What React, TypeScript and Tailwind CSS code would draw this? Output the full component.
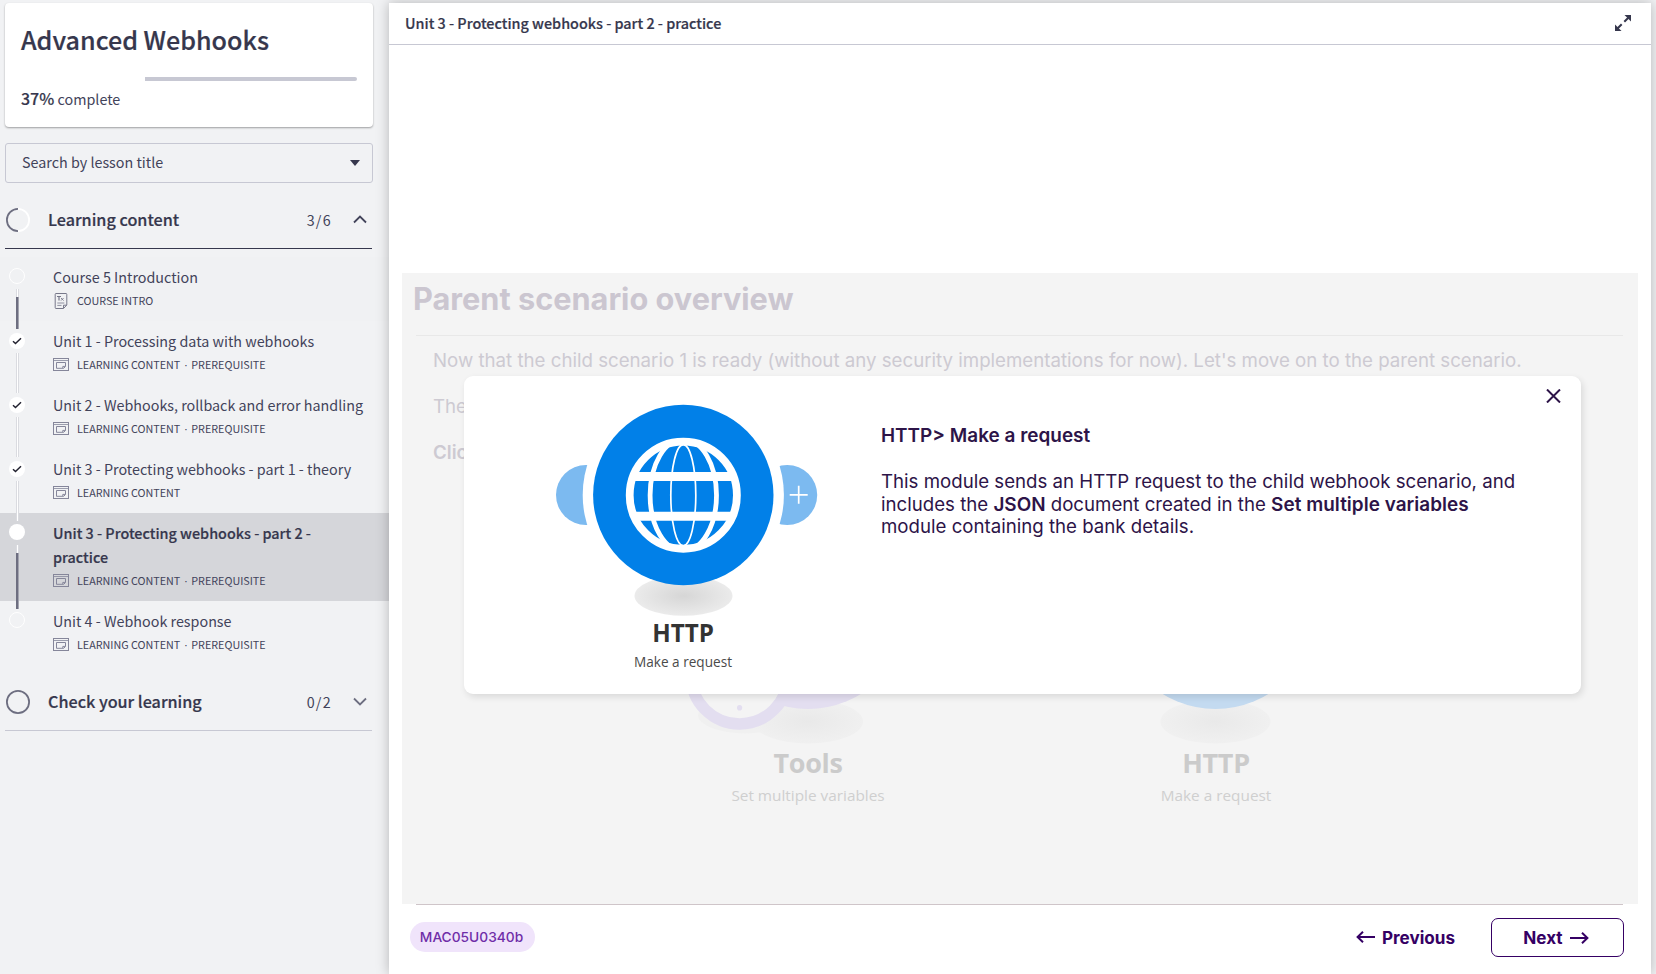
import React from 'react';

type Status = 'open' | 'done' | 'current';

interface Lesson {
  title: string;
  meta: string[];
  status: Status;
  link?: 'faint' | 'dark';
  intro?: boolean;
}

const lessons: Lesson[] = [
  { title: 'Course 5 Introduction', meta: ['COURSE INTRO'], status: 'open', link: 'dark', intro: true },
  { title: 'Unit 1 - Processing data with webhooks', meta: ['LEARNING CONTENT', 'PREREQUISITE'], status: 'done', link: 'faint' },
  { title: 'Unit 2 - Webhooks, rollback and error handling', meta: ['LEARNING CONTENT', 'PREREQUISITE'], status: 'done', link: 'faint' },
  { title: 'Unit 3 - Protecting webhooks - part 1 - theory', meta: ['LEARNING CONTENT'], status: 'done', link: 'faint' },
  { title: 'Unit 3 - Protecting webhooks - part 2 - practice', meta: ['LEARNING CONTENT', 'PREREQUISITE'], status: 'current', link: 'dark' },
  { title: 'Unit 4 - Webhook response', meta: ['LEARNING CONTENT', 'PREREQUISITE'], status: 'open' },
];

function DocIcon() {
  return (
    <svg width="16" height="18" viewBox="0 0 16 18" fill="none" stroke="#77788a" className="-my-1">
      <path d="M3 1.5h10a.8.8 0 0 1 .8.8V13l-3.3 3.5H3a.8.8 0 0 1-.8-.8V2.3A.8.8 0 0 1 3 1.5z" />
      <path d="M10.5 16.2v-3h3" />
      <path d="M4 4.5h4M6 4.5v4" strokeWidth="1.2" />
      <path d="M8 6l2.6 2.6M10.6 6L8 8.6" strokeWidth="0.9" />
      <path d="M4.3 11h7M4.3 13.4h4.2" strokeWidth="0.8" />
    </svg>
  );
}

function WindowIcon() {
  return (
    <svg width="16" height="13" viewBox="0 0 16 13" fill="none" stroke="#85869a">
      <rect x="0.5" y="0.5" width="15" height="12" />
      <path d="M0.5 2.5h15" strokeWidth="0.8" />
      <path d="M3.5 4.5h9v4l-1.8 1.8H3.5z" />
      <path d="M9.8 10v-1.6h2.4" />
    </svg>
  );
}

function Marker({ status }: { status: Status }) {
  if (status === 'open') return <span className="size-4 rounded-full border border-white" />;
  return (
    <span className="flex size-4 items-center justify-center rounded-full bg-white">
      {status === 'done' && (
        <svg width="10" height="8" viewBox="0 0 10 8" fill="none" stroke="#222230" strokeWidth="1.5">
          <path d="M1 4.2l2.5 2.3L9 1.2" />
        </svg>
      )}
    </span>
  );
}

function LessonRow({ lesson }: { lesson: Lesson }) {
  const current = lesson.status === 'current';
  return (
    <li
      className={
        current
          ? 'relative flex h-[88px] bg-[#d5d6da] pt-2 pl-[9px]'
          : lesson.intro
            ? 'relative flex h-16 bg-[#f0f1f3] pt-2 pl-[9px]'
            : 'relative flex h-16 pt-2 pl-[9px]'
      }
    >
      <div className={lesson.status === 'done' ? 'flex w-11 shrink-0 pt-[3.5px]' : 'flex w-11 shrink-0 pt-[3px]'}>
        <Marker status={lesson.status} />
      </div>
      {lesson.link === 'faint' && (
        <span className="absolute top-8 left-4 z-10 h-10 w-[3px] border-x border-[#dadbe0] bg-white" />
      )}
      {lesson.link === 'dark' && (
        <span className="absolute top-8 -bottom-2 left-4 z-10 flex w-[3px] flex-col">
          <span className="h-2 border-x border-[#dadbe0] bg-white" />
          <span className="flex-1 border-r border-[#a3a4b0] bg-[#6d6e80]" />
        </span>
      )}
      <div className="w-[312px]">
        <p
          className={
            current
              ? 'w-[270px] text-[14.38px] leading-6 font-medium text-[#36374d] [-webkit-text-stroke:0.2px_currentColor]'
              : 'text-[14.33px] leading-6 whitespace-nowrap text-[#42435a]'
          }
        >
          {lesson.title}
        </p>
        <div className="mt-1 flex h-4 items-center">
          <span className="flex w-6 pb-px">{lesson.intro ? <DocIcon /> : <WindowIcon />}</span>
          <p className="flex text-[10.75px] leading-4 text-[#42435a]">
            {lesson.meta.map((m, i) => (
              <React.Fragment key={m}>
                {i > 0 && <span className="w-[11px] text-center font-['Open_Sans',sans-serif]">·</span>}
                <span>{m}</span>
              </React.Fragment>
            ))}
          </p>
        </div>
      </div>
    </li>
  );
}

function SectionHeader({ title, count, open }: { title: string; count: string; open?: boolean }) {
  return (
    <div
      className={
        open
          ? 'ml-[5px] flex h-[57px] w-[367px] items-center border-b border-[#36374d]'
          : 'ml-[5px] flex h-[57px] w-[367px] items-center border-b border-[#c7c8d3]'
      }
    >
      <svg width="26" height="26" viewBox="0 0 26 26" fill="none" strokeWidth="1.8">
        {open ? (
          <>
            <path d="M13 1.9a11.1 11.1 0 0 1 0 22.2" stroke="#ffffff" />
            <path d="M13 1.9a11.1 11.1 0 0 0 0 22.2" stroke="#6d6e80" />
          </>
        ) : (
          <circle cx="13" cy="13" r="11.1" stroke="#6d6e80" />
        )}
      </svg>
      <h2 className="ml-[17px] flex-1 pb-0.5 text-[16.18px] font-medium text-[#36374d] [-webkit-text-stroke:0.2px_currentColor]">
        {title}
      </h2>
      <span className="text-[14.3px] tracking-[1.3px] text-[#42435a]">{count}</span>
      <svg
        width="14"
        height="9"
        viewBox="0 0 14 9"
        fill="none"
        stroke={open ? '#42435a' : '#6d6e80'}
        strokeWidth="1.8"
        className="mr-[5px] mb-px ml-[21px]"
      >
        {open ? <path d="M1 7.5l6-6 6 6" /> : <path d="M1 1.5l6 6 6-6" />}
      </svg>
    </div>
  );
}

function Sidebar() {
  return (
    <aside className="flex w-[389px] shrink-0 flex-col pt-[3px] font-['Noto_Sans_CJK_SC',sans-serif]">
      <section className="ml-[5px] h-[124px] w-[368px] rounded-[4px] bg-white pt-5 pl-4 shadow-[0_1px_2px_rgba(0,0,0,0.35)]">
        <h1 className="text-[25.1px] leading-8 font-medium text-[#36374d] [-webkit-text-stroke:0.2px_currentColor]">
          Advanced Webhooks
        </h1>
        <div className="mt-[22px] flex h-1 w-[336px]">
          <div className="w-[37%] bg-white" />
          <div className="flex-1 rounded-r-full bg-[#c7c8d3]" />
        </div>
        <p className="mt-[7px] text-[14.35px] leading-5 text-[#42435a]">
          <span className="text-[16px] font-medium text-[#36374d] [-webkit-text-stroke:0.15px_currentColor]">37%</span> complete
        </p>
      </section>

      <div className="mt-4 ml-[5px] flex h-10 w-[368px] items-center justify-between rounded-[3px] border border-[#c7c8d3] pr-3 pl-4">
        <span className="pb-0.5 text-[14.33px] text-[#42435a]">Search by lesson title</span>
        <svg width="10" height="6" viewBox="0 0 10 6" fill="#36374d">
          <path d="M0 0h10L5 6z" />
        </svg>
      </div>

      <div className="mt-[9px]">
        <SectionHeader title="Learning content" count="3/6" open />
      </div>
      <ul className="mt-2">
        {lessons.map((l) => (
          <LessonRow key={l.title} lesson={l} />
        ))}
      </ul>
      <div className="mt-[9px]">
        <SectionHeader title="Check your learning" count="0/2" />
      </div>
    </aside>
  );
}

function ToolsArt() {
  return (
    <svg width="260" height="247" viewBox="678 500 260 247">
      <defs>
        <radialGradient id="floorFaint">
          <stop offset="0" stopColor="#e9e9e9" />
          <stop offset="1" stopColor="#f0f0f0" />
        </radialGradient>
      </defs>
      <ellipse cx="745" cy="715" rx="47" ry="18.5" fill="#f0f0f0" />
      <ellipse cx="808" cy="721.5" rx="55" ry="22" fill="url(#floorFaint)" />
      <circle cx="808" cy="608" r="101" fill="#e3def0" />
      <circle cx="739.6" cy="675.4" r="48.5" fill="#f4f4f4" stroke="#e3def0" strokeWidth="11.5" />
      <ellipse cx="739.6" cy="707.7" rx="2.6" ry="2.8" fill="#e3def0" />
    </svg>
  );
}

function HttpFaintArt() {
  return (
    <svg width="260" height="247" viewBox="1086 500 260 247">
      <ellipse cx="1215.5" cy="721.5" rx="55" ry="22" fill="url(#floorFaint)" />
      <circle cx="1215.5" cy="608" r="101" fill="#c3daf0" />
    </svg>
  );
}

function FaintModule({ art, title, subtitle }: { art: React.ReactNode; title: string; subtitle: string }) {
  return (
    <div className="flex w-[260px] flex-col items-center font-['Open_Sans',sans-serif]">
      {art}
      <h3 className="text-[27px] leading-8 font-bold tracking-[-0.3px] text-[#cbcbcb]">{title}</h3>
      <p className="mt-1.5 text-[15.35px] leading-5 text-[#cfcfcf]">{subtitle}</p>
    </div>
  );
}

function HttpArt() {
  return (
    <svg width="280" height="218" viewBox="543 400 280 218">
      <defs>
        <radialGradient id="floor">
          <stop offset="0" stopColor="#d6d6d6" />
          <stop offset="1" stopColor="#ebebeb" />
        </radialGradient>
        <clipPath id="globe">
          <circle cx="683.3" cy="495" r="55" />
        </clipPath>
      </defs>
      <circle cx="586" cy="495" r="30" fill="#7cbaf0" />
      <circle cx="787.2" cy="495" r="30" fill="#7cbaf0" />
      <circle cx="683.3" cy="495" r="100.6" fill="#ffffff" />
      <path d="M789.7 494.8h18M798.7 485.8v18" stroke="#ffffff" strokeWidth="1.7" />
      <ellipse cx="683.5" cy="595.8" rx="49" ry="20" fill="url(#floor)" />
      <circle cx="683.3" cy="495" r="90.2" fill="#0180e8" />
      <circle cx="683.3" cy="495.2" r="53.6" fill="none" stroke="#ffffff" strokeWidth="7.8" />
      <g clipPath="url(#globe)" fill="none" stroke="#ffffff">
        <ellipse cx="683.3" cy="495.2" rx="12.5" ry="50.5" strokeWidth="1.7" />
        <ellipse cx="683.3" cy="495.2" rx="33.2" ry="56" strokeWidth="4.8" />
        <path d="M628 476.5h110M628 516.2h110" strokeWidth="9" />
      </g>
    </svg>
  );
}

function Modal() {
  return (
    <div className="absolute top-[103px] left-[62px] flex h-[318px] w-[1116.5px] rounded-[9px] bg-white shadow-[2px_3px_7px_rgba(0,0,0,0.11)]">
      <div className="ml-[79px] flex w-[280px] shrink-0 flex-col items-center pt-6 font-['Open_Sans',sans-serif]">
        <HttpArt />
        <h3 className="pt-px text-[24.2px] leading-7 font-bold text-[#333333]">HTTP</h3>
        <p className="mt-1.5 text-[13.6px] leading-[18px] text-[#4a4a4a]">Make a request</p>
      </div>
      <div className="ml-[58px] w-[650px] pt-[49px] text-[18.67px] leading-[22.5px] text-[#2d1448]">
        <h3 className="text-[18.95px] font-semibold">HTTP&gt; Make a request</h3>
        <p className="mt-[23.5px]">
          This module sends an HTTP request to the child webhook scenario, and
          <br />
          includes the <b className="text-[18.9px] font-semibold">JSON</b> document created in the{' '}
          <b className="text-[18.9px] font-semibold tracking-[0.05px]">Set multiple variables</b>
          <br />
          module containing the bank details.
        </p>
      </div>
      <button className="absolute top-[13px] right-5" aria-label="Close">
        <svg width="15" height="14" viewBox="0 0 15 14" stroke="#2d1448" strokeWidth="2" fill="none">
          <path d="M1 0.5l13 13M14 0.5l-13 13" />
        </svg>
      </button>
    </div>
  );
}

function LessonStage() {
  return (
    <div className="relative mt-[228px] ml-[13px] h-[631px] w-[1236px] bg-[#f4f4f4] pt-1.5">
      <h2 className="ml-[11px] text-[30.7px] leading-10 font-bold text-[#cbc6d0]">Parent scenario overview</h2>
      <div className="mt-4 mr-[15px] ml-[14px] h-px bg-[#e8e8e8]" />
      <div className="mt-[14px] ml-[31px] flex flex-col gap-6 text-[18.68px] leading-[22px] whitespace-nowrap text-[#cdcad2]">
        <p>
          Now that the child scenario 1 is ready (without any security implementations for now). Let's move on to the
          parent scenario.
        </p>
        <p>The</p>
        <p className="font-semibold">Click</p>
      </div>
      <div className="mt-9 ml-[276px] flex gap-[148px]">
        <FaintModule art={<ToolsArt />} title="Tools" subtitle="Set multiple variables" />
        <FaintModule art={<HttpFaintArt />} title="HTTP" subtitle="Make a request" />
      </div>
      <Modal />
    </div>
  );
}

export default function App() {
  return (
    <div className="flex h-[974px] w-[1656px] overflow-hidden bg-[#f1f2f4]">
      <Sidebar />
      <main className="relative mt-[3px] flex w-[1262px] flex-col bg-white font-['Inter',sans-serif] shadow-[0_0_12px_rgba(0,0,0,0.25)]">
        <header className="flex h-[42px] shrink-0 items-center justify-between border-b border-[#c7c8d3] pr-5 pb-0.5 pl-4">
          <p className="font-['Noto_Sans_CJK_SC',sans-serif] text-[14.38px] font-medium text-[#36374d] [-webkit-text-stroke:0.2px_currentColor]">
            Unit 3 - Protecting webhooks - part 2 - practice
          </p>
          <svg width="16" height="16" viewBox="0 0 16 16" fill="#36374d" stroke="#36374d">
            <path d="M9.3 6.7l4.5-4.5M6.7 9.3l-4.5 4.5" strokeWidth="2" fill="none" />
            <path d="M9.5 0H16v6.5l-2-2-2.5-2.5zM0 9.5V16h6.5l-2-2L2 11.5z" stroke="none" />
          </svg>
        </header>
        <LessonStage />
        <div className="mr-7 ml-[27px] h-px bg-[#cfc5c9]" />
        <footer className="flex items-center pt-[13px] pr-[27px] pl-[21px]">
          <span className="mb-px flex h-[30px] w-[125px] items-center justify-center rounded-full bg-[#f0e4fb] pt-px pr-0.5 text-[13.75px] font-medium text-[#6f2da8]">
            MAC05U0340b
          </span>
          <button className="ml-auto flex items-center gap-[7px] text-[17.1px] font-bold text-[#350064]">
            <svg width="19" height="12" viewBox="0 0 19 12" fill="none" stroke="#350064" strokeWidth="2">
              <path d="M19 6H1.5M7 0.8L1.6 6 7 11.2" />
            </svg>
            Previous
          </button>
          <button className="ml-9 flex h-[39px] w-[133px] items-center justify-center gap-[7px] rounded-[7px] border-[1.5px] border-[#350064] pr-[3px] text-[17.1px] font-bold text-[#350064]">
            Next
            <svg width="19" height="12" viewBox="0 0 19 12" fill="none" stroke="#350064" strokeWidth="2">
              <path d="M0 6h17.5M12 0.8L17.4 6 12 11.2" />
            </svg>
          </button>
        </footer>
      </main>
    </div>
  );
}
